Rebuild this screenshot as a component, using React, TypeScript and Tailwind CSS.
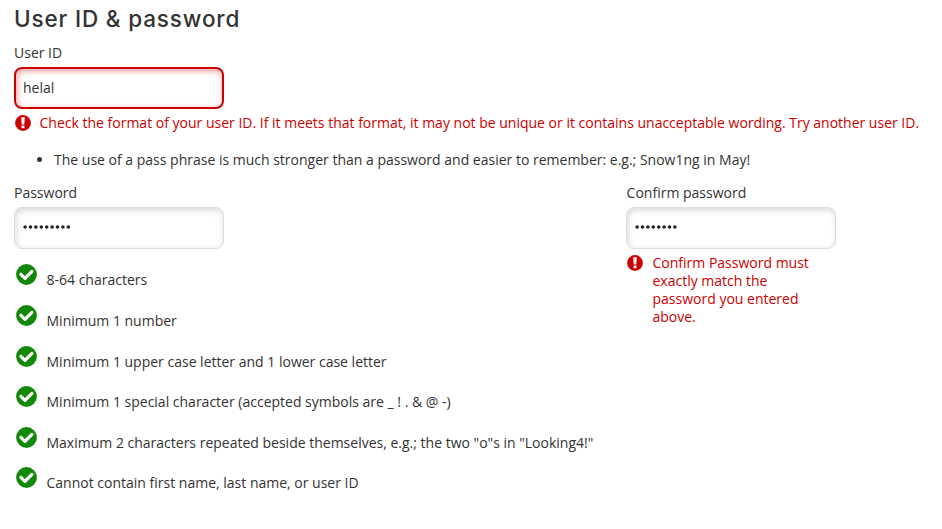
import React from "react";

const rules = [
  "8-64 characters",
  "Minimum 1 number",
  "Minimum 1 upper case letter and 1 lower case letter",
  "Minimum 1 special character (accepted symbols are _ ! . & @ -)",
  "Maximum 2 characters repeated beside themselves, e.g.; the two \"o\"s in \"Looking4!\"",
  "Cannot contain first name, last name, or user ID",
];

function ErrorIcon() {
  return (
    <svg className="mt-[1px] h-4 w-4 shrink-0" viewBox="0 0 16 16">
      <circle cx="8" cy="8" r="7.9" fill="#c00" />
      <path d="M6.2 2.3h3.6l-.5 7.1H6.7z" fill="#fff" />
      <rect x="6.5" y="10.6" width="3" height="2.6" rx=".5" fill="#fff" />
    </svg>
  );
}

function CheckIcon() {
  return (
    <svg className="h-[21px] w-[21px] shrink-0" viewBox="0 0 21 21">
      <circle cx="10.5" cy="10.5" r="10.4" fill="#138808" />
      <path d="M4.9 10.3l4.1 4 6.9-6.9" fill="none" stroke="#fff" strokeWidth="3.2" strokeLinecap="round" strokeLinejoin="round" />
    </svg>
  );
}

function Dots({ count }: { count: number }) {
  return (
    <svg className="h-1 w-12" viewBox="0 0 48 4">
      {Array.from({ length: count }, (_, i) => (
        <circle key={i} cx={2.1 + i * 5.4} cy="2" r="1.8" fill="#222" />
      ))}
    </svg>
  );
}

const field = "mt-[5px] flex h-[42px] w-[210px] items-center rounded-[8px] bg-white";
const plainField = field + " border border-[#ddd] pb-[2px] pl-2 shadow-[inset_1px_2px_6px_rgba(0,0,0,0.16)]";

export default function App() {
  return (
    <main className="h-[529px] w-[942px] overflow-hidden bg-white pl-[14px] font-['Open_Sans',sans-serif] text-[14px] leading-[18px] text-[#333]">
      <h1 className="pt-[5px] font-[Inter,sans-serif] text-[22.5px] leading-[28px] font-medium tracking-[0.85px]">User ID &amp; password</h1>
      <div className="mt-[11px]">User ID</div>
      <div className={field + " border-2 border-[#c00] pl-[7px] shadow-[inset_1px_2px_6px_rgba(204,0,0,0.4)]"}>helal</div>
      <div className="mt-[5px] flex whitespace-nowrap pl-[1px] text-[#c00]">
        <ErrorIcon />
        <span className="ml-[8.5px]">Check the format of your user ID. If it meets that format, it may not be unique or it contains unacceptable wording. Try another user ID.</span>
      </div>
      <ul className="mt-[19px] list-disc pl-10">
        <li>The use of a pass phrase is much stronger than a password and easier to remember: e.g.; Snow1ng in May!</li>
      </ul>
      <div className="mt-[15px] flex">
        <section className="w-[612px]">
          <div>Password</div>
          <div className={plainField}><Dots count={9} /></div>
          <ul className="mt-[15.4px]">
            {rules.map((rule) => (
              <li key={rule} className="flex h-[40.6px] pl-[1.5px]">
                <CheckIcon />
                <span className="ml-[10px] pt-[7px]">{rule}</span>
              </li>
            ))}
          </ul>
        </section>
        <section className="w-[210px]">
          <div className="pl-[0.6px]">Confirm password</div>
          <div className={plainField}><Dots count={8} /></div>
          <div className="mt-[5px] flex pl-[1px] text-[#c00]">
            <ErrorIcon />
            <span className="ml-[9.5px] w-[165px]">Confirm Password must exactly match the password you entered above.</span>
          </div>
        </section>
      </div>
    </main>
  );
}
